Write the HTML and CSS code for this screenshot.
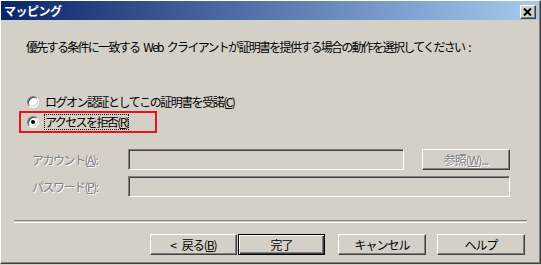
FILE: index.html
```html
<!DOCTYPE html>
<html lang="ja">
<head>
    <meta charset="UTF-8">
    <meta name="viewport" content="width=device-width, initial-scale=1.0">
    <title>マッピング</title>
    <link rel="stylesheet" href="styles.css">
</head>
<body>
    <div class="window">
        <div class="titlebar">
            <span class="title">マッピング</span>
            <span class="close-btn">
                <svg width="9" height="8" viewBox="0 0 9 8">
                    <path d="M1 0.5 L8 7.5 M8 0.5 L1 7.5" stroke="#000" stroke-width="2" fill="none"/>
                </svg>
            </span>
        </div>

        <div class="dialog-body">
            <p class="prompt">優先する条件に一致する Web クライアントが証明書を提供する場合の動作を選択してください :</p>

            <div class="choices">
                <div class="choice">
                    <span class="radio"></span>
                    <span class="choice-text">ログオン認証としてこの証明書を受諾(<u>C</u>)</span>
                </div>
                <div class="highlight">
                    <div class="choice">
                        <span class="radio checked"></span>
                        <span class="choice-text focused">アクセスを拒否(<u>R</u>)</span>
                    </div>
                </div>
            </div>

            <div class="fields">
                <div class="field">
                    <span class="field-label">アカウント(<u>A</u>):</span>
                    <span class="input input-short"></span>
                    <span class="button disabled browse">参照(<u>W</u>)...</span>
                </div>
                <div class="field">
                    <span class="field-label">パスワード(<u>P</u>):</span>
                    <span class="input input-long"></span>
                </div>
            </div>

            <div class="separator"></div>

            <div class="actions">
                <span class="button">&lt; 戻る(<u>B</u>)</span>
                <span class="button default">完了</span>
                <span class="button cancel">キャンセル</span>
                <span class="button help">ヘルプ</span>
            </div>
        </div>
    </div>
</body>
</html>
```

FILE: styles.css
```css
html, body {
    margin: 0;
    padding: 0;
    background-color: #d4d0c8;
}
body {
    font-family: "Noto Sans CJK JP", "DejaVu Sans", sans-serif;
    font-size: 12px;
    color: #000;
}
.window {
    width: 541px;
    height: 264px;
    box-sizing: border-box;
    background-color: #d4d0c8;
    border-top: 1px solid #ffffff;
    border-left: 1px solid #ffffff;
    border-right: 1px solid #404040;
    border-bottom: 1px solid #404040;
    box-shadow: inset -1px -1px 0 #808080;
    display: flex;
    flex-direction: column;
}
.titlebar {
    height: 19px;
    margin-right: 1px;
    box-sizing: border-box;
    padding: 4px 3px 0 3px;
    display: flex;
    align-items: flex-start;
    background: linear-gradient(to right, #0a246a, #a6caf0);
}
.title {
    color: #fff;
    font-weight: bold;
    font-size: 12px;
    line-height: 12px;
    letter-spacing: -0.5px;
}
.close-btn {
    margin-left: auto;
    width: 16px;
    height: 14px;
    box-sizing: border-box;
    background-color: #d4d0c8;
    border-top: 1px solid #fff;
    border-left: 1px solid #fff;
    border-right: 1px solid #404040;
    border-bottom: 1px solid #404040;
    box-shadow: inset -1px -1px 0 #808080;
    display: flex;
    align-items: center;
    justify-content: center;
}
.close-btn svg {
    display: block;
    margin-right: 1px;
}
.dialog-body {
    display: flex;
    flex-direction: column;
}
.prompt {
    margin: 20px 0 0 25px;
    line-height: 14px;
    letter-spacing: -1.7px;
    word-spacing: 3px;
}
.choices {
    margin-top: 41px;
    display: flex;
    flex-direction: column;
}
.choice {
    display: flex;
    align-items: center;
    height: 14px;
    line-height: 14px;
}
.choices > .choice {
    margin-left: 26px;
}
.choice-text {
    margin-left: 6px;
    letter-spacing: -1.5px;
    white-space: nowrap;
}
.choice-text.focused {
    letter-spacing: -1.6px;
    outline: 1px dotted #000;
    outline-offset: 0;
}
.radio {
    width: 12px;
    height: 12px;
    box-sizing: border-box;
    border-radius: 50%;
    background-color: #fff;
    border: 1px solid;
    border-color: #808080 #fff #fff #808080;
    box-shadow: inset 1px 1px 0 #404040, inset -1px -1px 0 #d4d0c8;
    display: flex;
    align-items: center;
    justify-content: center;
}
.radio.checked::after {
    content: "";
    width: 4px;
    height: 4px;
    border-radius: 50%;
    background-color: #000;
}
.highlight {
    margin: 2px 0 0 18px;
    width: 138px;
    height: 22px;
    box-sizing: border-box;
    border: 2px solid #e8141c;
    padding: 2px 0 0 6px;
}
.fields {
    margin-top: 16px;
    display: flex;
    flex-direction: column;
    gap: 6px;
}
.field {
    display: flex;
    align-items: center;
    height: 21px;
    padding-left: 31px;
}
.field-label {
    width: 96px;
    color: #808080;
    text-shadow: 1px 1px 0 #fff;
    letter-spacing: -1.5px;
    white-space: nowrap;
}
.input {
    height: 21px;
    box-sizing: border-box;
    border-top: 1px solid #808080;
    border-left: 1px solid #808080;
    border-right: 1px solid #fff;
    border-bottom: 1px solid #fff;
    box-shadow: inset 1px 1px 0 #404040, inset -1px -1px 0 #d4d0c8;
}
.input-short {
    width: 276px;
}
.input-long {
    width: 382px;
}
.button {
    height: 21px;
    box-sizing: border-box;
    border-top: 1px solid #fff;
    border-left: 1px solid #fff;
    border-right: 1px solid #404040;
    border-bottom: 1px solid #404040;
    box-shadow: inset -1px -1px 0 #808080;
    display: flex;
    align-items: center;
    justify-content: center;
    width: 87px;
    line-height: 14px;
    letter-spacing: -1px;
    word-spacing: 4px;
    white-space: nowrap;
}
.button.disabled {
    color: #808080;
    text-shadow: 1px 1px 0 #fff;
}
.browse {
    margin-left: 18px;
    width: 88px;
}
.separator {
    margin: 23px 0 0 13px;
    width: 513px;
    height: 1px;
    border-top: 1px solid #808080;
    border-bottom: 1px solid #fff;
}
.actions {
    margin-top: 11px;
    padding-left: 149px;
    display: flex;
    gap: 1px;
}
.button.default {
    border: 1px solid #000;
    box-shadow: inset 1px 1px 0 #fff, inset -1px -1px 0 #404040, inset -2px -2px 0 #808080;
}
.cancel {
    margin-left: 12px;
    width: 88px;
}
.help {
    margin-left: 10px;
    width: 88px;
}
```
